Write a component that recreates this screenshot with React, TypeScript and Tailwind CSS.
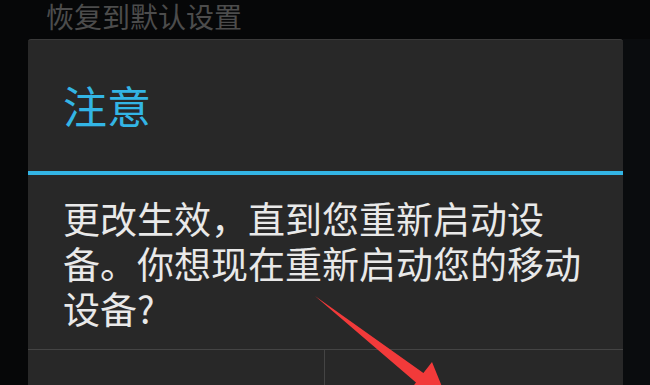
export default function App() {
  const font = { fontFamily: '"Noto Sans CJK SC", "Noto Sans", sans-serif' };
  return (
    <div className="relative w-[650px] h-[385px] overflow-hidden bg-[#060708]" style={font}>
      <div className="pl-[46px] h-[39px] text-[28px] leading-[32px] text-[#4c4c4c] whitespace-nowrap">
        恢复到默认设置
      </div>
      <div className="flex">
        <div className="w-[28px] shrink-0" />
        <div className="w-[595px] h-[346px] shrink-0 bg-[#282828] border-t border-[#3a3a3a] rounded-t-[3px] flex flex-col">
          <div className="h-[131px] pl-[35px] pt-[43px] text-[44px] leading-[44px] text-[#33b5e5]">
            注意
          </div>
          <div className="h-[4px] bg-[#33b5e5]" />
          <div className="h-[174px] pl-[35px] pt-[21px] text-[37px] leading-[45px] text-[#e9e9e9] whitespace-nowrap">
            更改生效，直到您重新启动设
            <br />
            备。你想现在重新启动您的移动
            <br />
            设备?
          </div>
          <div className="h-px bg-[#444444]" />
          <div className="flex flex-1">
            <div className="w-[297px] border-r border-[#444444]" />
            <div className="flex-1" />
          </div>
        </div>
        <div className="flex-1 h-[346px] bg-[#0a0c0e]" />
      </div>
      <svg className="absolute left-0 top-0" width="650" height="385" viewBox="0 0 650 385">
        <polygon
          points="315,296 423.4,373.1 432,362 447,399 407.4,393.6 416,382.5"
          fill="#f23a3a"
        />
      </svg>
    </div>
  );
}
